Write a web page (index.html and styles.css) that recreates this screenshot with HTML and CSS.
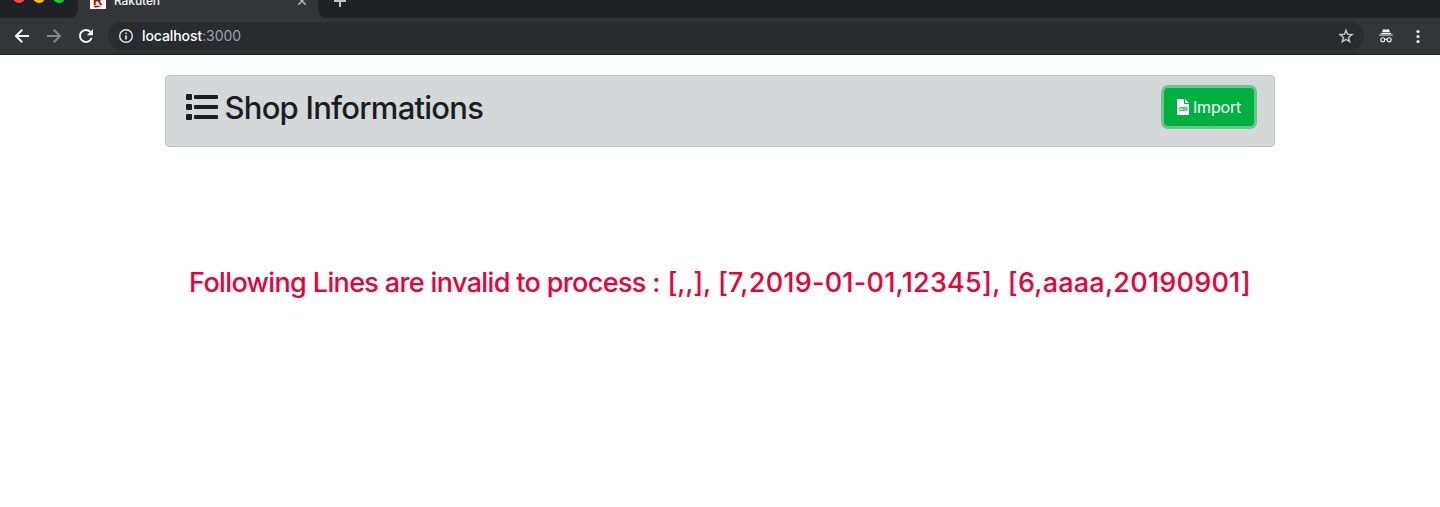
FILE: index.html
```html
<!DOCTYPE html>
<html lang="en">
<head>
<meta charset="utf-8">
<title>Rakuten</title>
<link rel="stylesheet" href="styles.css">
</head>
<body>
<header class="browser">
  <div class="tabstrip">
    <div class="strip-left"><i class="light red"></i><i class="light yellow"></i><i class="light green"></i></div>
    <div class="tab">
      <svg class="favicon" width="16" height="16" viewBox="0 0 16 16"><rect width="16" height="16" fill="#fff"/><text x="3" y="11.500" class="favicon-letter">R</text><path d="M3 12.800h10l-7.500 2z" fill="#bf0000"/></svg>
      <span class="tab-title">Rakuten</span>
      <svg class="tab-close" width="10" height="10" viewBox="0 0 10 10"><path d="M1.3 1.3l7.4 7.4M8.7 1.3L1.3 8.7" stroke="#b4b8bb" stroke-width="1.5"/></svg>
    </div>
    <div class="strip-right"><svg width="12" height="12" viewBox="0 0 12 12"><path d="M6 0v12M0 6h12" stroke="#bdc1c6" stroke-width="2"/></svg></div>
  </div>
  <div class="toolbar">
    <svg class="nav" width="16" height="16" viewBox="0 0 16 16"><path d="M15 8H2.5M8.2 1.8L2 8l6.2 6.2" fill="none" stroke="#f1f3f4" stroke-width="2"/></svg>
    <svg class="nav" width="16" height="16" viewBox="0 0 16 16"><path d="M1 8h12.500M7.800 1.800L14 8l-6.200 6.200" fill="none" stroke="#85888a" stroke-width="2"/></svg>
    <svg class="nav" width="16" height="16" viewBox="0 0 16 16"><path d="M13.600 10A6 6 0 1 1 12.400 3.900" fill="none" stroke="#f1f3f4" stroke-width="2"/><path d="M15 1v6.200H8.800z" fill="#f1f3f4"/></svg>
    <div class="omnibox">
      <svg width="16" height="16" viewBox="0 0 16 16"><circle cx="8" cy="8" r="6.300" fill="none" stroke="#e8eaed" stroke-width="1.400"/><path d="M8 7.200v4.200M8 4.400v1.600" stroke="#e8eaed" stroke-width="1.600"/></svg>
      <span class="url"><b>localhost</b>:3000</span>
      <svg class="star" width="16" height="16" viewBox="0 0 16 16"><path d="M8 2.300l1.600 4 4.300.3-3.300 2.800 1.050 4.200L8 11.300l-3.650 2.300L5.400 9.400 2.100 6.600l4.300-.3z" fill="none" stroke="#bdc1c6" stroke-width="1.500"/></svg>
    </div>
    <svg class="incognito" width="16" height="16" viewBox="0 0 16 16"><path d="M5 1.300h1.200l1.800.5 1.800-.5H11l1 2.900H4zM3 5h10l.4 1H2.600zM1.300 6.400h13.400v1.100H1.300z" fill="#f1f3f4"/><g fill="none" stroke="#f1f3f4" stroke-width="1.100"><circle cx="4.800" cy="11.800" r="2"/><circle cx="11.200" cy="11.800" r="2"/><path d="M6.800 11.600q1.200-.7 2.400 0"/></g></svg>
    <svg class="more" width="4" height="16" viewBox="0 0 4 16" fill="#f1f3f4"><circle cx="2" cy="3.500" r="1.600"/><circle cx="2" cy="8.500" r="1.600"/><circle cx="2" cy="13.500" r="1.600"/></svg>
  </div>
</header>
<main class="container">
  <section class="card">
    <svg class="list-icon" width="32" height="32" viewBox="0 0 32 32" fill="#1a1d22"><rect y="3" width="6" height="6" rx="1"/><rect y="13" width="6" height="6" rx="1"/><rect y="23" width="6" height="6" rx="1"/><rect x="8" y="4" width="24" height="4" rx="1"/><rect x="8" y="14" width="24" height="4" rx="1"/><rect x="8" y="24" width="24" height="4" rx="1"/></svg>
    <h1 class="title">Shop Informations</h1>
    <button class="import"><svg width="12" height="16" viewBox="0 0 12 16"><path d="M.75 0H7v4.250c0 .4.350.750.750.750H12v10.250c0 .4-.350.750-.750.750H.75A.75.75 0 0 1 0 15.250V.75C0 .35.35 0 .75 0zM8 0l4 4H8z" fill="#fff"/><text x="1.900" y="11.900" textLength="8.600" lengthAdjust="spacingAndGlyphs" class="csv">CSV</text></svg><span>Import</span></button>
  </section>
  <p class="message"><span class="words">Following Lines are invalid to process </span><span class="empty">: [,,], </span><span class="lines">[7,2019-01-01,12345], [6,aaaa,20190901]</span></p>
</main>
</body>
</html>
```
FILE: styles.css
```css
* { box-sizing: border-box; }
body { margin: 0; background: #fff; font-family: Inter, "Liberation Sans", sans-serif; height: 507px; overflow: hidden; }
svg { display: block; flex: none; }
.browser { height: 55px; background: #323639; border-bottom: 1px solid #202124; }
.tabstrip { height: 18px; display: flex; }
.strip-left { width: 78px; background: #202124; border-bottom-right-radius: 8px; display: flex; gap: 8px; padding-left: 13px; }
.light { width: 12px; height: 12px; border-radius: 50%; margin-top: -9px; }
.red { background: #ff4744; }
.yellow { background: #ffbd00; }
.green { background: #00d830; }
.tab { width: 240px; display: flex; padding-left: 12px; }
.favicon { margin-top: -7px; }
.favicon-letter { font: bold 13px "Liberation Sans", sans-serif; fill: #bf0000; }
.tab-title { margin: -7px 0 0 8px; font-size: 12px; line-height: 16px; font-weight: 500; color: #f1f3f4; letter-spacing: -0.1px; }
.tab-close { margin: -4px 11px 0 auto; }
.strip-right { flex: 1; background: #202124; border-bottom-left-radius: 8px; padding-left: 16px; }
.strip-right svg { margin-top: -5px; }
.toolbar { height: 36px; display: flex; align-items: center; padding: 0 20px 0 14px; }
.nav { margin-right: 16px; }
.omnibox { width: 1256px; height: 28px; margin-left: -2px; border-radius: 14px; background: #282c2f; display: flex; align-items: center; padding: 0 10px; }
.url { margin-left: 8px; font-size: 14px; line-height: 20px; color: #9aa0a6; letter-spacing: -0.08px; }
.url b { color: #fff; font-weight: 500; }
.star { margin-left: auto; }
.incognito { margin-left: 14px; }
.more { margin-left: auto; }
.container { width: 1110px; margin: 20px auto 0; }
.card { height: 72px; background: #d4d8d9; border: 1px solid #bfc2c3; border-radius: 4px; display: flex; align-items: flex-start; padding: 12px 20px; }
.list-icon { margin-top: 3px; }
.title { margin: 1px 0 0 6.5px; font-size: 31px; line-height: 38px; font-weight: 500; color: #1a1d22; white-space: nowrap; letter-spacing: -0.76px; }
.import { height: 38px; width: 90px; margin: 0 0 0 auto; padding: 0; border: 0; border-radius: 4px; background: #00b140; box-shadow: 0 0 0 3px #6ac78c; color: #fff; font: 16px/24px Inter, sans-serif; letter-spacing: -0.2px; display: flex; align-items: center; justify-content: center; gap: 4px; }
.csv { font: bold 5px "Liberation Sans", sans-serif; fill: #00b140; stroke: #00b140; stroke-width: 0.25px; letter-spacing: 0; }
.message { margin: 119px 0 0; font-size: 27px; line-height: 34px; font-weight: 500; color: #eb0037; text-align: center; white-space: nowrap; }
.words { letter-spacing: -0.64px; }
.empty { letter-spacing: -0.15px; }
.lines { letter-spacing: 0.23px; }
```
